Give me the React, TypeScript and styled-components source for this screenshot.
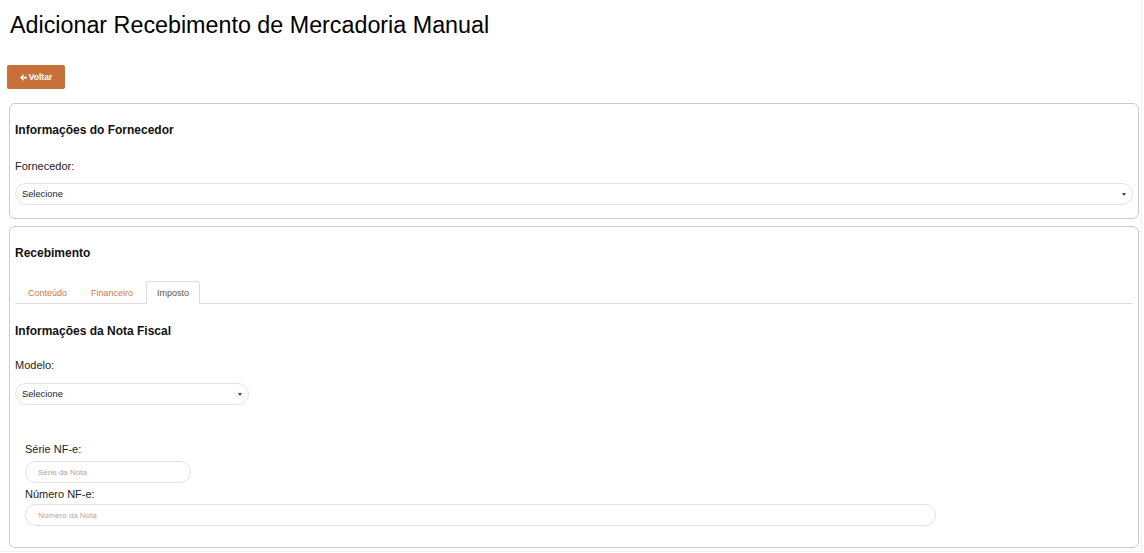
import React from "react";
import styled, { createGlobalStyle } from "styled-components";

const GlobalStyle = createGlobalStyle`
  html, body {
    margin: 0;
    padding: 0;
    background: #ffffff;
  }
  body {
    font-family: "Liberation Sans", Arial, sans-serif;
    color: #333333;
  }
  * { box-sizing: border-box; }
`;

const Page = styled.div`
  width: 1142px;
  height: 552px;
  padding: 12px 2px 0 7px;
  border-right: 1px solid #f1f1f1;
  border-bottom: 1px solid #f1f1f1;
  display: flex;
  flex-direction: column;
  align-items: stretch;
`;

const Title = styled.h1`
  margin: 0 0 0 3px;
  font-size: 23.3px;
  line-height: 26px;
  font-weight: normal;
  color: #000000;
`;

const BackButton = styled.button`
  align-self: flex-start;
  margin-top: 27px;
  width: 58px;
  height: 24px;
  padding: 0;
  border: none;
  border-radius: 2px;
  background: #c8703a;
  color: #ffffff;
  font-family: "Liberation Sans", Arial, sans-serif;
  font-size: 8.5px;
  font-weight: bold;
  display: flex;
  align-items: center;
  justify-content: center;
  gap: 2px;
  cursor: pointer;
  svg { display: block; }
`;

const Panel = styled.section<{ $gap: number; $bottom: number }>`
  margin: ${(p) => p.$gap}px 0 0 2px;
  border: 1px solid #cbcbcb;
  border-radius: 6px;
  padding: 0 5px ${(p) => p.$bottom}px 5px;
  display: flex;
  flex-direction: column;
`;

const Heading = styled.h3<{ $top: number }>`
  margin: ${(p) => p.$top}px 0 0 0;
  font-size: 12px;
  line-height: 14px;
  font-weight: bold;
  color: #111111;
`;

const Label = styled.label<{ $top: number }>`
  display: block;
  margin-top: ${(p) => p.$top}px;
  font-size: 11px;
  line-height: 13px;
  color: #222222;
`;

const SelectBox = styled.div<{ $top: number; $width?: number }>`
  margin-top: ${(p) => p.$top}px;
  width: ${(p) => (p.$width ? `${p.$width}px` : "100%")};
  height: 22px;
  border: 1px solid #e2e2e2;
  border-radius: 11px;
  padding: 0 6px 0 6px;
  display: flex;
  align-items: center;
  justify-content: space-between;
  font-size: 9.3px;
  color: #222222;
  background: #ffffff;
`;

const Caret = styled.span`
  width: 0;
  height: 0;
  border-left: 2px solid transparent;
  border-right: 2px solid transparent;
  border-top: 3px solid #444444;
  margin-top: 1px;
`;

const TabBar = styled.div`
  margin-top: 21px;
  height: 23px;
  border-bottom: 1px solid #dddddd;
  display: flex;
  align-items: stretch;
  padding-left: 2px;
  gap: 2px;
`;

const Tab = styled.div<{ $active?: boolean }>`
  height: 23px;
  padding: 0 10px;
  margin-bottom: -1px;
  display: flex;
  align-items: center;
  font-size: 9px;
  color: ${(p) => (p.$active ? "#555555" : "#cf7a43")};
  background: ${(p) => (p.$active ? "#ffffff" : "transparent")};
  border: 1px solid ${(p) => (p.$active ? "#dddddd" : "transparent")};
  border-bottom-color: ${(p) => (p.$active ? "#ffffff" : "transparent")};
  border-radius: 3px 3px 0 0;
`;

const FieldGroup = styled.div`
  padding-left: 10px;
  display: flex;
  flex-direction: column;
  align-items: flex-start;
`;

const TextInput = styled.input<{ $top: number; $width: number }>`
  margin-top: ${(p) => p.$top}px;
  width: ${(p) => p.$width}px;
  height: 22px;
  border: 1px solid #e2e2e2;
  border-radius: 11px;
  padding: 0 12px;
  font-family: "Liberation Sans", Arial, sans-serif;
  font-size: 8px;
  color: #333333;
  outline: none;
  background: #ffffff;
  &::placeholder {
    color: #a8a8a8;
  }
`;

const ArrowLeft = () => (
  <svg width="7" height="7" viewBox="0 0 8 8" aria-hidden="true">
    <path d="M3.6 0.4 L0.2 4 L3.6 7.6 L4.6 6.6 L2.9 5 L7.8 5 L7.8 3 L2.9 3 L4.6 1.4 Z" fill="#ffffff" />
  </svg>
);

export default function App() {
  return (
    <>
      <GlobalStyle />
      <Page>
        <Title>Adicionar Recebimento de Mercadoria Manual</Title>
        <BackButton type="button">
          <ArrowLeft />
          <span>Voltar</span>
        </BackButton>

        <Panel $gap={14} $bottom={13}>
          <Heading $top={19}>Informações do Fornecedor</Heading>
          <Label $top={23}>Fornecedor:</Label>
          <SelectBox $top={10}>
            <span>Selecione</span>
            <Caret />
          </SelectBox>
        </Panel>

        <Panel $gap={7} $bottom={21}>
          <Heading $top={19}>Recebimento</Heading>
          <TabBar>
            <Tab>Conteúdo</Tab>
            <Tab>Financeiro</Tab>
            <Tab $active>Imposto</Tab>
          </TabBar>
          <Heading $top={20}>Informações da Nota Fiscal</Heading>
          <Label $top={21}>Modelo:</Label>
          <SelectBox $top={11} $width={234}>
            <span>Selecione</span>
            <Caret />
          </SelectBox>
          <FieldGroup>
            <Label $top={38}>Série NF-e:</Label>
            <TextInput $top={5} $width={166} placeholder="Série da Nota" />
            <Label $top={5}>Número NF-e:</Label>
            <TextInput $top={3} $width={911} placeholder="Número da Nota" />
          </FieldGroup>
        </Panel>
      </Page>
    </>
  );
}
